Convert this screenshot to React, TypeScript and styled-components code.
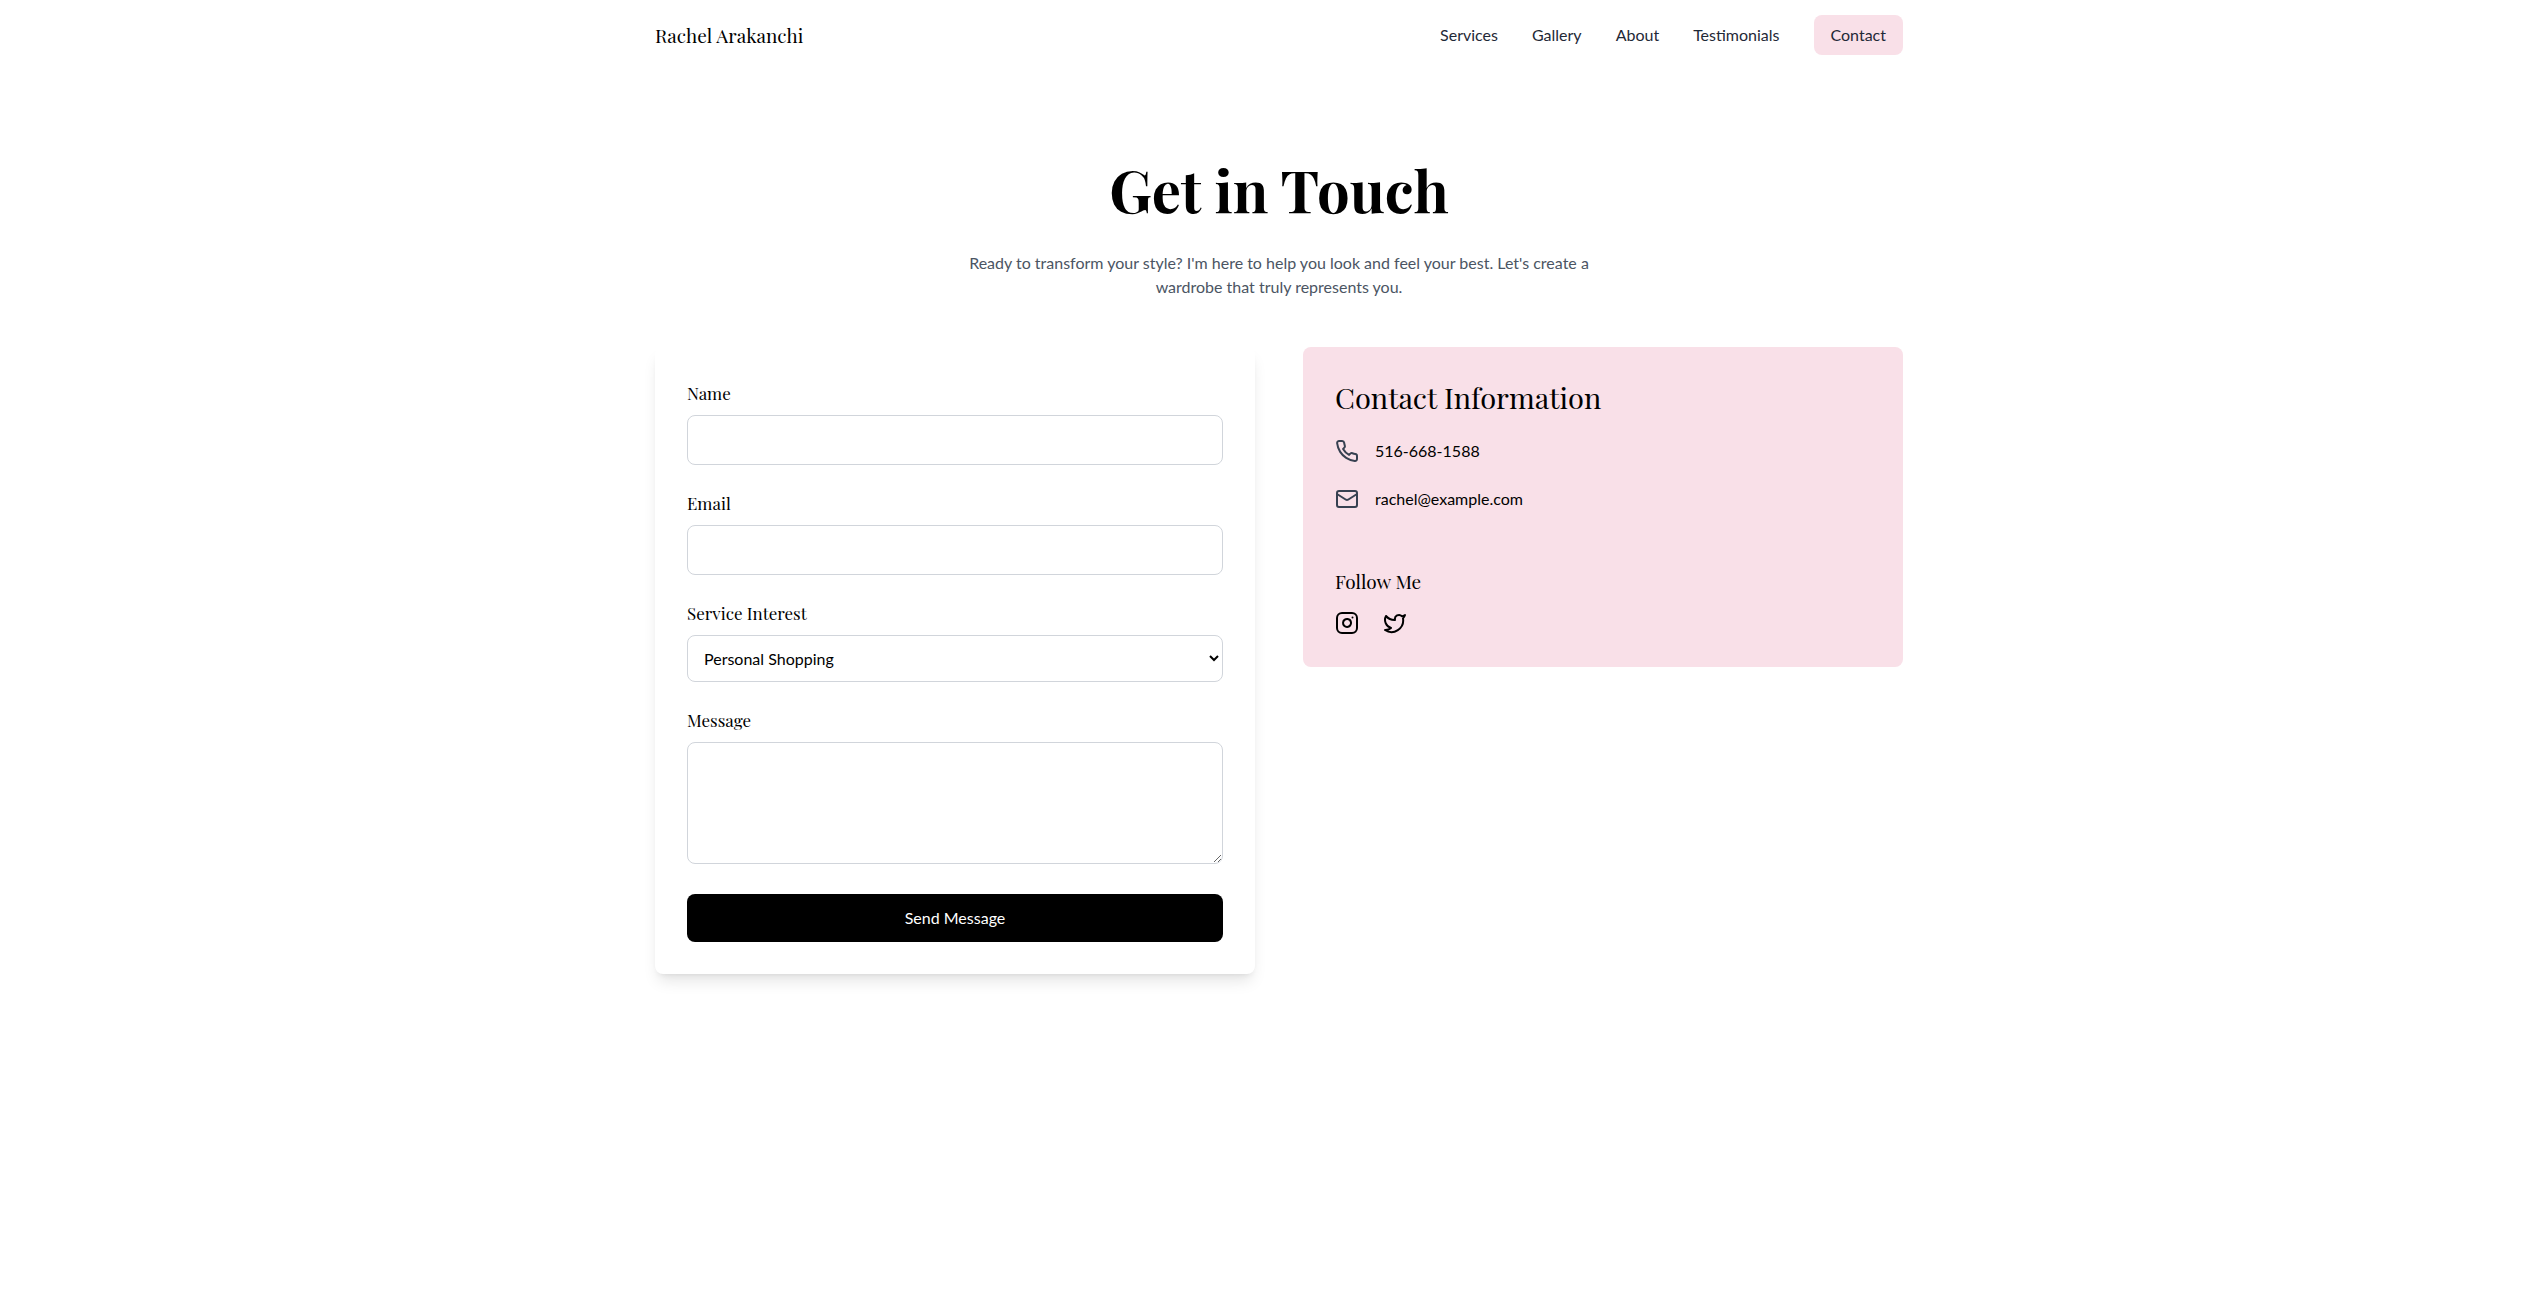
import React from "react";
import styled, { createGlobalStyle } from "styled-components";
import { Instagram, Mail, Twitter } from "lucide-react";

const serif = `"Playfair Display", "Liberation Serif", serif`;
const sans = `Lato, "Liberation Sans", sans-serif`;
const pink = "#f9e0e8";

const GlobalStyle = createGlobalStyle`
  *, *::before, *::after { box-sizing: border-box; }
  body {
    margin: 0;
    background: #fff;
    color: #000;
    font-family: ${sans};
    font-size: 16px;
    line-height: 24px;
  }
  h1, h2, h3, p, ul { margin: 0; padding: 0; }
  a { color: inherit; text-decoration: none; }
`;

const Page = styled.div`
  padding-left: 14px;
`;

const Container = styled.div`
  max-width: 1280px;
  margin: 0 auto;
  padding: 0 16px;
`;

const NavBar = styled(Container).attrs({ as: "nav" })`
  display: flex;
  align-items: center;
  justify-content: space-between;
  height: 70px;
`;

const Logo = styled.a`
  font-family: ${serif};
  font-size: 19px;
  line-height: 28px;
`;

const NavLinks = styled.div`
  display: flex;
  align-items: center;
  gap: 34px;
`;

const NavLink = styled.a<{ $active?: boolean }>`
  color: #1f2937;
  padding: ${(p) => (p.$active ? "8px 17px" : "8px 0")};
  background: ${(p) => (p.$active ? pink : "transparent")};
  border-radius: 8px;
`;

const Main = styled(Container).attrs({ as: "main" })`
  padding-top: 89px;
  padding-bottom: 64px;
`;

const Hero = styled.header`
  display: flex;
  flex-direction: column;
  align-items: center;
  gap: 32px;
  margin-bottom: 48px;
  text-align: center;
`;

const Title = styled.h1`
  font-family: ${serif};
  font-size: 58px;
  font-weight: 700;
  line-height: 60px;
`;

const Intro = styled.p`
  max-width: 672px;
  color: #4b5563;
`;

const Columns = styled.div`
  display: grid;
  grid-template-columns: repeat(auto-fit, minmax(min(100%, 400px), 1fr));
  align-items: start;
  gap: 48px;
`;

const FormCard = styled.form`
  display: flex;
  flex-direction: column;
  gap: 24px;
  padding: 32px;
  border-radius: 8px;
  background: #fff;
  box-shadow: 0 10px 15px -3px rgba(0, 0, 0, 0.1), 0 4px 6px -4px rgba(0, 0, 0, 0.1);
`;

const Field = styled.div``;

const Label = styled.label`
  display: block;
  margin-bottom: 8px;
  font-family: ${serif};
  font-size: 17px;
  line-height: 28px;
`;

const controlStyle = `
  width: 100%;
  padding: 12px;
  border: 1px solid #d1d5db;
  border-radius: 8px;
  background: #fff;
  color: #000;
  font-family: ${sans};
  font-size: 16px;
`;

const Input = styled.input`
  ${controlStyle}
  display: block;
  line-height: 24px;
  height: 50px;
`;

const Select = styled.select`
  ${controlStyle}
  display: block;
  height: 47px;
`;

const TextArea = styled.textarea`
  ${controlStyle}
  line-height: 24px;
  resize: vertical;
`;

const SubmitButton = styled.button`
  padding: 12px 24px;
  border: 0;
  border-radius: 8px;
  background: #000;
  color: #fff;
  font-family: ${sans};
  font-size: 16px;
  line-height: 24px;
  cursor: pointer;
`;

const InfoCard = styled.section`
  padding: 32px;
  border-radius: 8px;
  background: ${pink};
`;

const InfoTitle = styled.h2`
  margin-bottom: 24px;
  font-family: ${serif};
  font-size: 29px;
  font-weight: 400;
  line-height: 36px;
`;

const ContactList = styled.ul`
  display: flex;
  flex-direction: column;
  gap: 24px;
  margin-bottom: 56px;
  list-style: none;
`;

const ContactItem = styled.li`
  display: flex;
  align-items: center;
  gap: 16px;

  svg { color: #374151; }
`;

const FollowTitle = styled.h3`
  margin-bottom: 16px;
  font-family: ${serif};
  font-size: 19px;
  font-weight: 400;
  line-height: 28px;
`;

const SocialLinks = styled.div`
  display: flex;
  gap: 24px;

  a { display: flex; }
`;

const PhoneIcon = () => (
  <svg
    width="24"
    height="24"
    viewBox="0 0 24 24"
    fill="none"
    stroke="currentColor"
    strokeWidth="2"
    strokeLinecap="round"
    strokeLinejoin="round"
    aria-hidden="true"
  >
    <path d="M22 16.92v3a2 2 0 0 1-2.18 2 19.79 19.79 0 0 1-8.63-3.07 19.5 19.5 0 0 1-6-6 19.79 19.79 0 0 1-3.07-8.67A2 2 0 0 1 4.11 2h3a2 2 0 0 1 2 1.72 12.84 12.84 0 0 0 .7 2.81 2 2 0 0 1-.45 2.11L8.09 9.91a16 16 0 0 0 6 6l1.27-1.27a2 2 0 0 1 2.11-.45 12.84 12.84 0 0 0 2.81.7A2 2 0 0 1 22 16.92z" />
  </svg>
);

const links = ["Services", "Gallery", "About", "Testimonials"];

export default function App() {
  return (
    <Page>
      <GlobalStyle />
      <NavBar>
        <Logo href="#home">Rachel Arakanchi</Logo>
        <NavLinks>
          {links.map((name) => (
            <NavLink key={name} href={`#${name.toLowerCase()}`}>{name}</NavLink>
          ))}
          <NavLink href="#contact" $active>Contact</NavLink>
        </NavLinks>
      </NavBar>
      <Main>
        <Hero>
          <Title>Get in Touch</Title>
          <Intro>
            Ready to transform your style? I'm here to help you look and feel your best. Let's create a
            wardrobe that truly represents you.
          </Intro>
        </Hero>
        <Columns>
          <FormCard onSubmit={(e) => e.preventDefault()}>
            <Field>
              <Label htmlFor="name">Name</Label>
              <Input id="name" type="text" />
            </Field>
            <Field>
              <Label htmlFor="email">Email</Label>
              <Input id="email" type="email" />
            </Field>
            <Field>
              <Label htmlFor="service">Service Interest</Label>
              <Select id="service" defaultValue="Personal Shopping">
                <option>Personal Shopping</option>
              </Select>
            </Field>
            <Field>
              <Label htmlFor="message">Message</Label>
              <TextArea id="message" rows={4} />
            </Field>
            <SubmitButton type="submit">Send Message</SubmitButton>
          </FormCard>
          <InfoCard>
            <InfoTitle>Contact Information</InfoTitle>
            <ContactList>
              <ContactItem>
                <PhoneIcon />
                <a href="tel:516-668-1588">516-668-1588</a>
              </ContactItem>
              <ContactItem>
                <Mail size={24} />
                <a href="mailto:rachel@example.com">rachel@example.com</a>
              </ContactItem>
            </ContactList>
            <FollowTitle>Follow Me</FollowTitle>
            <SocialLinks>
              <a href="#instagram" aria-label="Instagram"><Instagram size={24} /></a>
              <a href="#twitter" aria-label="Twitter"><Twitter size={24} /></a>
            </SocialLinks>
          </InfoCard>
        </Columns>
      </Main>
    </Page>
  );
}
